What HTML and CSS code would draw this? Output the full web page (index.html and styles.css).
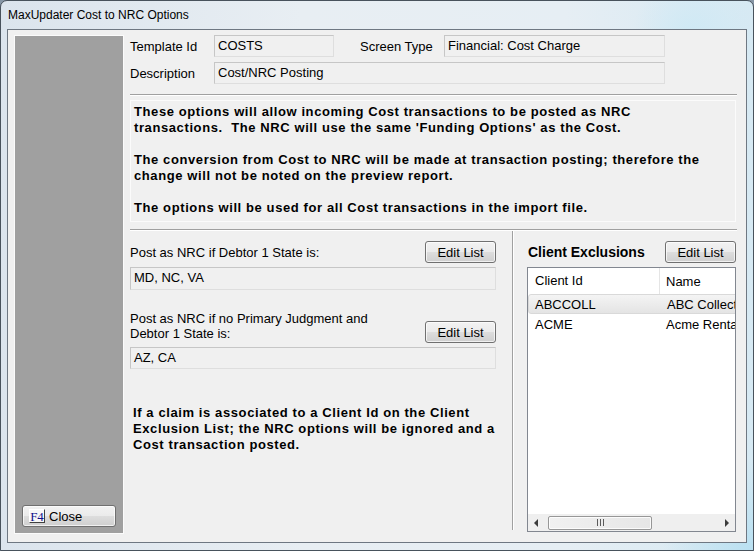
FILE: index.html
```html
<!DOCTYPE html>
<html lang="en">
<head>
<meta charset="utf-8">
<title>MaxUpdater Cost to NRC Options</title>
<link rel="stylesheet" href="styles.css">
</head>
<body>
<div class="window">
  <div class="titlebar">MaxUpdater Cost to NRC Options</div>
  <div class="client">
    <aside class="side">
      <button class="btn close"><span class="key">F4</span><span class="close-txt">Close</span></button>
    </aside>
    <main class="main">
      <div class="row">
        <span class="lbl">Template Id</span>
        <div class="field f-id">COSTS</div>
        <span class="lbl lbl-st">Screen Type</span>
        <div class="field f-st">Financial: Cost Charge</div>
      </div>
      <div class="row r2">
        <span class="lbl">Description</span>
        <div class="field f-desc">Cost/NRC Posting</div>
      </div>
      <div class="sep"></div>
      <div class="info">
        <p>These options will allow incoming Cost transactions to be posted as NRC<br>transactions.&nbsp; The NRC will use the same 'Funding Options' as the Cost.</p>
        <p>The conversion from Cost to NRC will be made at transaction posting; therefore the<br>change will not be noted on the preview report.</p>
        <p>The options will be used for all Cost transactions in the import file.</p>
      </div>
      <div class="sep sep2"></div>
      <div class="lower">
        <section class="left">
          <div class="opt">
            <span>Post as NRC if Debtor 1 State is:</span>
            <button class="btn edit">Edit List</button>
          </div>
          <div class="field lfield lf1">MD, NC, VA</div>
          <div class="opt opt2">
            <span class="two">Post as NRC if no Primary Judgment and<br>Debtor 1 State is:</span>
            <button class="btn edit">Edit List</button>
          </div>
          <div class="field lfield">AZ, CA</div>
          <p class="note">If a claim is associated to a Client Id on the Client<br>Exclusion List; the NRC options will be ignored and a<br>Cost transaction posted.</p>
        </section>
        <div class="vsep"></div>
        <section class="right">
          <div class="rhead">
            <span class="rtitle">Client Exclusions</span>
            <button class="btn edit edit-r">Edit List</button>
          </div>
          <div class="list">
            <div class="lhead">
              <div class="c1">Client Id</div>
              <div class="c2">Name</div>
            </div>
            <div class="lrow sel"><div class="c1">ABCCOLL</div><div class="c2">ABC Collections</div></div>
            <div class="lrow"><div class="c1">ACME</div><div class="c2">Acme Rentals</div></div>
            <div class="lfill"></div>
            <div class="hscroll">
              <div class="arrow">
                <svg width="5" height="8" viewBox="0 0 5 8"><path d="M4 0 L0 4 L4 8 Z" fill="#3c3c3c"/></svg>
              </div>
              <div class="thumb">
                <svg width="7" height="7" viewBox="0 0 7 7"><path d="M0.5 0 V7 M3.5 0 V7 M6.5 0 V7" stroke="#5a5a5a" stroke-width="1"/></svg>
              </div>
              <div class="track"></div>
              <div class="arrow">
                <svg width="5" height="8" viewBox="0 0 5 8"><path d="M1 0 L5 4 L1 8 Z" fill="#3c3c3c"/></svg>
              </div>
            </div>
          </div>
        </section>
      </div>
    </main>
  </div>
</div>
</body>
</html>
```

FILE: styles.css
```css
* { box-sizing: border-box; }

html, body {
  margin: 0;
  padding: 0;
}

body {
  width: 754px;
  height: 551px;
  overflow: hidden;
  background: #8696a6;
  font-family: "Liberation Sans", Arial, sans-serif;
  font-size: 13px;
  color: #000;
}

.window {
  width: 754px;
  height: 551px;
  border: 1px solid #48525c;
  border-radius: 7px 7px 0 0;
  background:
    radial-gradient(circle at 100% 100%, #b9e0f1 0, rgba(185,224,241,0) 90px),
    radial-gradient(circle at 92% 6%, #cfe9f5 0, rgba(207,233,245,0) 60px),
    linear-gradient(90deg, #dbe4ed 0%, #e8eef3 40%, #e6eef4 75%, #d6e9f3 100%);
  display: flex;
  flex-direction: column;
}

.titlebar {
  height: 28px;
  padding-left: 7px;
  line-height: 28px;
  font-size: 12px;
  color: #000;
}

.client {
  margin: 0 6px;
  height: 514px;
  border: 1px solid #6e7782;
  background: #f0f0f0;
  display: flex;
}

.side {
  margin: 5px 0 8px 6px;
  width: 110px;
  background: #a0a0a0;
  border: 1px solid #fbfbfb;
  display: flex;
  flex-direction: column;
  justify-content: flex-end;
  padding: 0 0 6px 7px;
}

.btn {
  font-family: "Liberation Sans", Arial, sans-serif;
  font-size: 13px;
  color: #000;
  height: 22px;
  border: 1px solid #707070;
  border-radius: 3px;
  background: linear-gradient(#f2f2f2 0%, #ebebeb 48%, #dddddd 52%, #cfcfcf 100%);
  box-shadow: inset 0 0 0 1px rgba(255,255,255,0.7);
  padding: 0;
  margin: 0;
}

.close {
  width: 94px;
  display: flex;
  align-items: center;
  padding-left: 6px;
}

.key {
  display: inline-block;
  width: 16px;
  height: 14px;
  font-family: "Liberation Serif", "Times New Roman", serif;
  font-size: 13px;
  line-height: 13px;
  color: #10108a;
  text-align: center;
  border-top: 1px solid #ffffff;
  border-left: 1px solid #ffffff;
  border-right: 1px solid #404040;
  border-bottom: 1px solid #404040;
  background: #f7f7f7;
}

.close-txt {
  margin-left: 4px;
}

.main {
  margin: 5px 0 0 6px;
  width: 607px;
  display: flex;
  flex-direction: column;
}

.row {
  display: flex;
  align-items: center;
  height: 22px;
}

.r2 { margin-top: 5px; }

.lbl { width: 84px; }

.lbl-st { margin-left: 26px; }

.field {
  height: 22px;
  border: 1px solid;
  border-color: #c6c6c6 #dedede #dedede #c6c6c6;
  background: #f0f0f0;
  padding: 0 3px;
  line-height: 20px;
  white-space: nowrap;
  overflow: hidden;
}

.f-id { width: 120px; }
.f-st { width: 221px; }
.f-desc { width: 451px; }

.sep {
  margin-top: 10px;
  height: 2px;
  border-top: 1px solid #a0a0a0;
  border-bottom: 1px solid #ffffff;
}

.info {
  margin-top: 4px;
  width: 606px;
  height: 122px;
  border: 1px solid #fbfbfb;
  padding: 3px 0 0 3px;
  font-weight: bold;
  line-height: 16px;
  letter-spacing: 0.6px;
}

.info p { margin: 0 0 16px; }

.sep2 { margin-top: 7px; }

.lower {
  display: flex;
}

.left {
  width: 366px;
  padding-top: 10px;
}

.opt {
  display: flex;
  justify-content: space-between;
  align-items: center;
  height: 22px;
}

.edit { width: 71px; }

.lfield {
  margin-top: 4px;
  width: 366px;
}

.lf1 { height: 23px; }

.opt2 {
  margin-top: 21px;
  height: 32px;
  align-items: flex-end;
}

.two {
  line-height: 15px;
  align-self: flex-start;
}

.note {
  margin: 36px 0 0;
  padding-left: 3px;
  font-weight: bold;
  line-height: 16px;
  letter-spacing: 0.6px;
}

.vsep {
  margin-left: 16px;
  width: 2px;
  height: 299px;
  border-left: 1px solid #a0a0a0;
  border-right: 1px solid #ffffff;
}

.right {
  margin-left: 13px;
  width: 209px;
  padding-top: 10px;
}

.rhead {
  display: flex;
  justify-content: space-between;
  align-items: center;
  height: 22px;
}

.rtitle {
  font-weight: bold;
  font-size: 14px;
  padding-left: 1px;
}

.list {
  margin-top: 4px;
  height: 265px;
  border: 1px solid #828790;
  background: #ffffff;
  display: flex;
  flex-direction: column;
  overflow: hidden;
}

.lhead {
  height: 26px;
  display: flex;
  align-items: center;
  flex: none;
}

.c1 {
  width: 132px;
  padding-left: 7px;
  flex: none;
  white-space: nowrap;
}

.lhead .c1 {
  height: 26px;
  line-height: 26px;
  border-right: 1px solid #e5e5e5;
}

.c2 {
  padding-left: 6px;
  white-space: nowrap;
  flex: none;
}

.lrow {
  height: 20px;
  display: flex;
  align-items: center;
  flex: none;
}

.sel {
  background: linear-gradient(#f4f4f4, #e4e4e4);
  border: 1px solid #d9d9d9;
  border-radius: 3px;
  margin-right: -4px;
}

.sel .c1 { padding-left: 6px; }

.lfill { flex: 1; }

.hscroll {
  height: 17px;
  flex: none;
  display: flex;
  align-items: center;
  background: #efefef;
  padding: 1px 0;
}

.arrow {
  width: 17px;
  height: 15px;
  flex: none;
  display: flex;
  align-items: center;
  justify-content: center;
}

.thumb {
  margin-left: 3px;
  width: 104px;
  height: 14px;
  flex: none;
  border: 1px solid #979797;
  border-radius: 2px;
  background: linear-gradient(90deg, #f1f1f1, #e6e6e6);
  box-shadow: inset 0 0 0 1px rgba(255,255,255,0.8);
  display: flex;
  align-items: center;
  justify-content: center;
}

.track { flex: 1; }
```
